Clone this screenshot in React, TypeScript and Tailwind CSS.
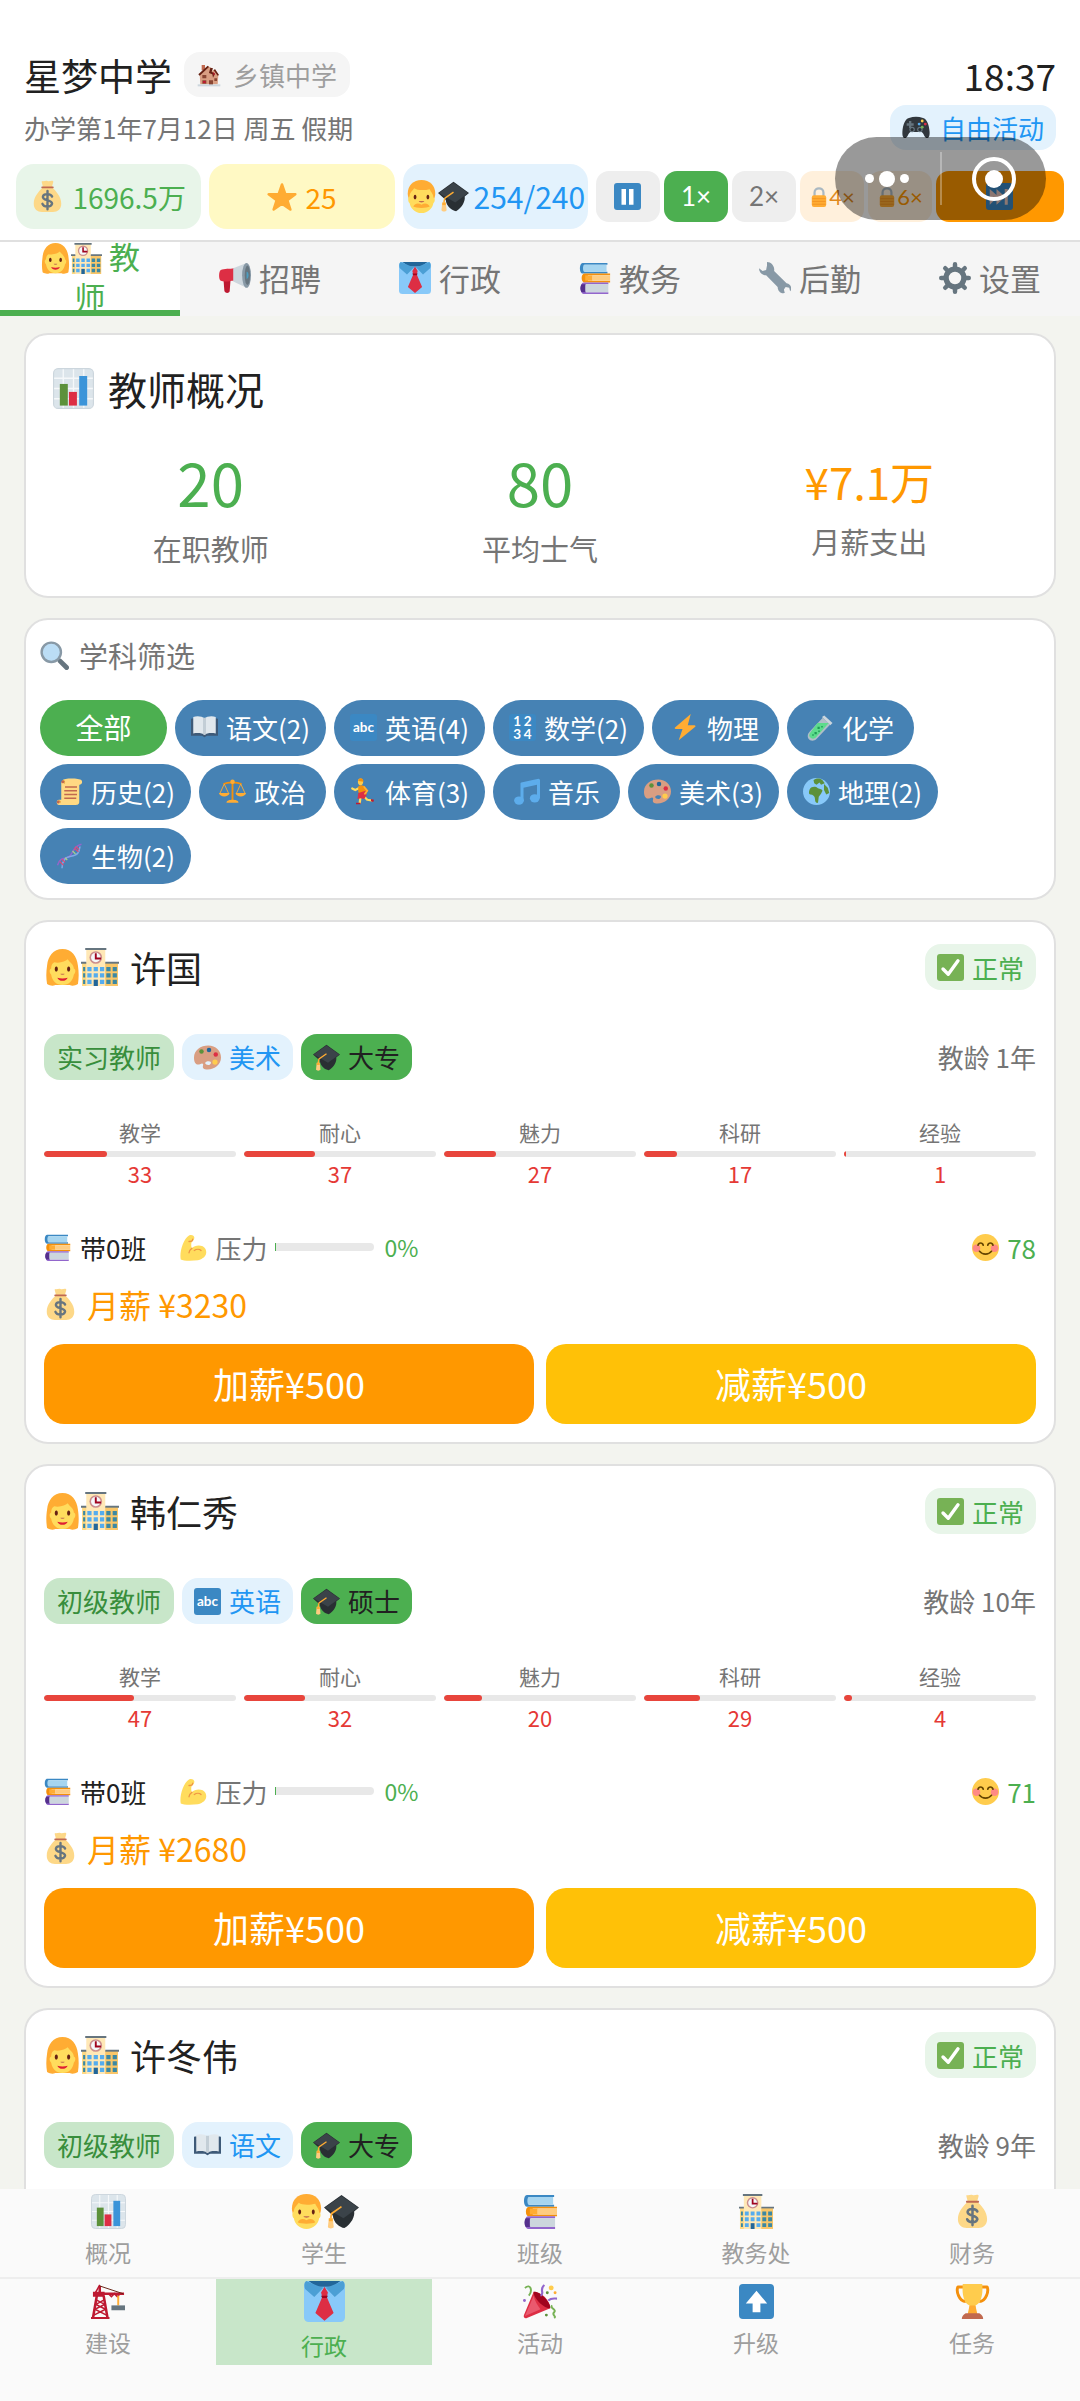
import type { ReactNode } from "react";
import { clsx } from "clsx";

/* All glyphs are drawn on a 36 x 36 grid. */
const ICONS: Record<string, ReactNode> = {
  house: (
    <>
      <path fill="#C1694F" d="M7 3h5v8H7z" />
      <path fill="#D99E82" d="M4 17 17 5l5 3-2 6 5-4 7 8-1 14H5z" />
      <path fill="#662113" d="M2 17 16 4l2 2L4 19zM20 7l4 1-2 5 5 3-3 6-1-5-5-2zM27 9l6 9-2 1-6-8z" />
      <path fill="#8A4633" d="M8 18h6v5H8zM18 26h6v7h-6zM8 26h6v5H8zM26 23h4v4h-4z" />
      <path fill="#BE1931" d="M9 27h4v3H9zM24 13l3 3-2 3z" />
      <path fill="#CCD6DD" d="M1 32h34v3H1z" />
    </>
  ),
  gamepad: (
    <>
      <path fill="#31373D" d="M9 5c6-2 12-2 18 0 5 1 8 9 8.500 18 .3 6-1.500 8-3.500 8-3 0-4-7-7-8H11c-3 1-4 8-7 8-2 0-3.800-2-3.500-8C1 14 4 6 9 5z" />
      <path fill="#66757F" d="M9 9h3v3h3v3h-3v3H9v-3H6v-3h3z" />
      <circle cx="13" cy="20" r="3.500" fill="#66757F" />
      <circle cx="23" cy="20" r="3.500" fill="#66757F" />
      <circle cx="13" cy="20" r="2" fill="#292F33" />
      <circle cx="23" cy="20" r="2" fill="#292F33" />
      <circle cx="26" cy="9" r="1.800" fill="#FFCC4D" />
      <circle cx="26" cy="17" r="1.800" fill="#77B255" />
      <circle cx="22" cy="13" r="1.800" fill="#55ACEE" />
      <circle cx="30" cy="13" r="1.800" fill="#DD2E44" />
    </>
  ),
  money: (
    <>
      <path fill="#FDD888" d="M12 1c2 1 4-1 6 0s4-1 6 0c1 1-1 4-1 7 4 4 10 10 10 18 0 6-4 9-9 9H12c-5 0-9-3-9-9C3 18 9 12 13 8c0-3-2-6-1-7z" />
      <path fill="#BF6952" d="M12 7h12c1 0 1 2 0 2H12c-1 0-1-2 0-2z" />
      <path fill="none" stroke="#67757F" strokeWidth="2.600" strokeLinecap="round" d="M18 12v20M23 18c-1-3-9-4-10 0-1 5 10 3 10 8-1 4-9 4-10.500 0" />
    </>
  ),
  star: (
    <path fill="#FFAC33" stroke="#FFAC33" strokeWidth="3" strokeLinejoin="round" d="m18 3 4 11.500 12 .2-9.600 7.200L28 33l-10-7-10 7 3.600-11.100L2 14.700l12-.2z" />
  ),
  man: (
    <>
      <path fill="#FFAC33" d="M18 0C9 0 3 6 3 15c0 3 1 6 3 8h24c2-2 3-5 3-8C33 6 27 0 18 0z" />
      <path fill="#FFDC5D" d="M5 18c0-4 3-6 5-9 4 3 13 2 17 1 1 3 4 5 4 9 2 0 2 5 0 6-1 6-6 11-13 11S6 31 5 25c-2-1-2-7 0-7z" />
      <path fill="#662113" d="M11 16c2 0 2 5 0 5s-2-5 0-5zM25 16c2 0 2 5 0 5s-2-5 0-5z" />
      <path fill="#C1694F" d="M15 23h6c0 2-6 2-6 0z" />
      <path fill="#FFAC33" d="M9 29c2-4 6-4 9-2 3-2 7-2 9 2-3 2-15 2-18 0z" />
    </>
  ),
  woman: (
    <>
      <path fill="#FFAC33" d="M18 0C9 0 4 7 3 16c-1 7-1 12 0 18 3 2 6 2 8 1h14c2 1 5 1 8-1 1-6 1-11 0-18C32 7 27 0 18 0z" />
      <path fill="#FFDC5D" d="M7 19c0-3 1-5 3-6 6 1 11-1 13-3 2 3 6 5 6 9 2 1 2 4 0 6-1 6-5 10-11 10S8 31 7 25c-2-2-2-5 0-6z" />
      <path fill="#662113" d="M12 17c2 0 2 5 0 5s-2-5 0-5zM24 17c2 0 2 5 0 5s-2-5 0-5z" />
      <path fill="#C1694F" d="M16 24h4c0 1.500-4 1.500-4 0z" />
      <path fill="#DF1F32" d="M13 28c3 1 7 1 10 0-1 4-9 4-10 0z" />
    </>
  ),
  cap: (
    <>
      <path fill="#292F33" d="M0 14 18 1l18 13-5 4c1 5-3 13-10 17-5-1-11-5-12-13z" />
      <path fill="#3B4349" d="M1 14 18 2l17 12-15 11z" />
      <path fill="none" stroke="#FFAC33" strokeWidth="1.800" d="M18 13 8 20c-1 2-1 4-1 7" />
      <path fill="#FFCC80" d="M5 25h4l1 9c-1 2-5 2-6 0z" />
      <path fill="#FFAC33" d="M5 25h4v3H5z" />
    </>
  ),
  pause: (
    <>
      <rect width="36" height="36" rx="4" fill="#3B88C3" />
      <path fill="#fff" d="M10 8h6v21h-6zM20 8h6v21h-6z" />
    </>
  ),
  next: (
    <>
      <rect width="36" height="36" rx="4" fill="#3B88C3" />
      <path fill="#E9C7BE" d="m5 8 9 8V8l11 10V8h4v21h-4V19L14 29v-9l-9 9z" />
    </>
  ),
  lock: (
    <>
      <path fill="none" stroke="#AAB8C2" strokeWidth="4" d="M10 18v-8c0-10 16-10 16 0v8" />
      <rect x="5" y="15" width="26" height="21" rx="4" fill="#FFAC33" />
      <path stroke="#F19020" strokeWidth="1.500" d="M6 21h24M6 26h24M6 31h24" />
    </>
  ),
  school: (
    <>
      <path fill="#FFD983" d="M1 14h34v22H1z" />
      <path fill="#FFE8B6" d="M5 1h18v35H5z" />
      <path fill="#66757F" d="M4 0h20v2H4zM0 13h5v2H0zM23 13h13v2H23z" />
      <path fill="#F4B350" opacity=".5" d="M23 15h12v21H23z" />
      <circle cx="14" cy="9" r="6" fill="#A1466B" opacity=".55" />
      <circle cx="14" cy="9" r="4.500" fill="#F5F8FA" />
      <path fill="none" stroke="#A0041E" strokeWidth="1.800" d="M14 5v5h5" />
      <path fill="#55ACEE" d="M6 18h4v4H6zM12 18h4v4h-4zM18 18h4v4h-4zM6 24h4v4H6zM12 24h4v4h-4zM18 24h4v4h-4zM6 30h4v4H6zM18 30h4v4h-4z" />
      <path fill="#3B88A3" d="M2 18h2v4H2zM24 18h4v4h-4zM30 18h4v4h-4zM2 24h2v4H2zM24 24h4v4h-4zM30 24h4v4h-4zM2 30h2v4H2zM24 30h4v4h-4zM30 30h4v4h-4z" />
      <path fill="#226699" d="M12 30h4v6h-4z" />
    </>
  ),
  megaphone: (
    <>
      <path fill="#BE1931" d="m5 19 8 1-1 13c-1 3-6 2-6-1z" />
      <path fill="#DD2E44" d="M2 9c4-2 10-1 15-2v14C12 21 6 23 2 21c-3-2-2-11 0-12z" />
      <path fill="#CCD6DD" d="M16 7 31 1v28l-15-7z" />
      <ellipse cx="31" cy="15" rx="5" ry="14" fill="#8899A6" />
      <ellipse cx="32" cy="15" rx="3" ry="11" fill="#66757F" />
      <path fill="#4B9DC0" d="M31 11c3 0 3 8 0 8z" />
    </>
  ),
  tie: (
    <>
      <rect width="36" height="36" rx="4" fill="#88C9F9" />
      <path fill="#226699" d="M4 0h28l-7 5H11z" />
      <path fill="#4B9FD5" d="M2 0 14 5l4 1 4-1L34 0c2 1 2 5 1 7l-8 7-8-8h-2l-8 8-8-7C0 5 0 1 2 0z" />
      <path fill="#DD2E44" d="m18 5 3 5-1 4 6 14-8 7-8-7 6-14-1-4z" />
      <path fill="#A0041E" d="M15 13h6l-1 2h-4z" />
    </>
  ),
  books: (
    <>
      <path fill="#3B88C3" d="M4 1h28v2H6v8h26v2H4C0 13 0 1 4 1z" />
      <path fill="#A6D5F0" d="M6 3h25v8H6c-2 0-2-8 0-8z" />
      <path fill="#F4900C" d="M6 13h29v2H10v6h25v2H6c-4 0-4-10 0-10z" />
      <path fill="#FFCC80" d="M15 15h20v6H15z" />
      <path fill="#FFAC33" d="M7 15h8v6H7z" />
      <path fill="#9266CC" d="M5 23h28v2H8v9h25v2H5c-4 0-4-13 0-13z" />
      <path fill="#CCD6DD" d="M8 25h25v9H8c-2 0-2-9 0-9z" />
      <path fill="#55308D" d="M3 25h4v9H3c-2-2-2-7 0-9z" />
    </>
  ),
  wrench: (
    <path fill="#8899A6" d="M9 0c5 0 9 5 8 10l14 14c6 1 6 7 4 9l-1-4-4-1-2 3 1 4c-5 1-8-3-8-7L8 15C3 15 0 11 0 7l4 3 4-1 1-5z" />
  ),
  gear: (
    <>
      <circle cx="18" cy="18" r="10" fill="none" stroke="#66757F" strokeWidth="6" />
      <path stroke="#66757F" strokeWidth="5" strokeLinecap="round" d="M18 2.500v3M18 30.500v3M2.500 18h3M30.500 18h3M7 7l2 2M27 27l2 2M7 29l2-2M27 9l2-2" />
    </>
  ),
  chart: (
    <>
      <rect x=".5" y=".5" width="35" height="35" rx="4" fill="#DCE5EB" stroke="#CCD6DD" />
      <path stroke="#F5F8FA" strokeWidth="1.200" d="M9 1v34M18 1v34M27 1v34M1 9h34M1 18h34M1 27h34" />
      <path fill="#5C913B" d="M6 14h7v19H6z" />
      <path fill="#DD2E44" d="M14 21h7v12h-7z" />
      <path fill="#3B94D9" d="M23 7h7v26h-7z" />
    </>
  ),
  search: (
    <>
      <path stroke="#66757F" strokeWidth="6" strokeLinecap="round" d="m25 25 8 8" />
      <circle cx="14" cy="14" r="12" fill="#BBDDF5" stroke="#8899A6" strokeWidth="3" />
    </>
  ),
  book: (
    <>
      <path fill="#3E5A78" d="M1 6h34c1 0 1 1 1 2v21H22c-2 0-3 2-4 2s-2-2-4-2H0V8c0-1 0-2 1-2z" />
      <path fill="#E1E8ED" d="M3 4c5-2 12-1 15 2 3-3 10-4 15-2v22c-5-1-12-1-15 2-3-3-10-3-15-2z" />
      <path fill="#C3CED6" d="M16 5h4v22l-2 1-2-1z" />
    </>
  ),
  abc: (
    <>
      <rect width="36" height="36" rx="4" fill="#3B88C3" />
      <text x="18" y="24" fill="#fff" fontFamily="Lato, sans-serif" fontWeight="700" fontSize="18" textAnchor="middle">abc</text>
    </>
  ),
  numbers: (
    <>
      <rect width="36" height="36" rx="4" fill="#3B88C3" />
      <text x="11" y="16" fill="#fff" fontFamily="Lato, sans-serif" fontWeight="700" fontSize="18" textAnchor="middle">1</text>
      <text x="25" y="16" fill="#fff" fontFamily="Lato, sans-serif" fontWeight="700" fontSize="18" textAnchor="middle">2</text>
      <text x="11" y="33" fill="#fff" fontFamily="Lato, sans-serif" fontWeight="700" fontSize="18" textAnchor="middle">3</text>
      <text x="25" y="33" fill="#fff" fontFamily="Lato, sans-serif" fontWeight="700" fontSize="18" textAnchor="middle">4</text>
    </>
  ),
  zap: <path fill="#FFAC33" d="M25 0 4 18c-1 1 0 2 1 2h9L9 35l22-18c1-1 0-2-1-2h-9z" />,
  tube: (
    <>
      <path fill="#CCD6DD" d="m23 2 11 10-3 3L20 4z" />
      <path fill="#B0BEC8" d="m21 5 10 9-18 19c-4 4-9 3-11 0s-1-7 2-10z" />
      <path fill="#5DDC8C" d="M14 12h15L12 31c-3 3-6 2-8 0s-1-4 1-7z" />
      <path fill="#1F9B57" d="M14 17h3v3h-3zM10 24h3v3h-3zM19 16h2v2h-2zM15 22h2v2h-2zM7 27h2v2H7z" />
    </>
  ),
  scroll: (
    <>
      <path fill="#FFD983" d="M9 3c1-3 22-3 25 0 2 3 0 6-3 6v23c0 4-4 4-6 4H4c-4 0-4-7 0-7h3V6z" />
      <path fill="#E39F3D" d="M9 3c3-2 5 5 1 5 2-1 1-4-1-5zM2 31c2-3 6 0 4 3 0-2-1-3-4-3z" />
      <path stroke="#C1694F" strokeWidth="2" d="M12 12h16M11 17h17M11 22h17M11 27h16" />
      <circle cx="9" cy="5" r="2" fill="#C1694F" />
      <circle cx="3" cy="32" r="2" fill="#C1694F" />
    </>
  ),
  scales: (
    <>
      <path fill="none" stroke="#F4900C" strokeWidth="2.500" d="M18 3v27M6 8c6-3 18-3 24 0" />
      <path fill="none" stroke="#FFAC33" strokeWidth="1.200" d="M7 8 1 21h12zM29 8l-6 13h12z" />
      <path fill="#FFAC33" d="M0 20h14c-1 6-13 6-14 0zM22 20h14c-1 6-13 6-14 0zM10 33c0-3 4-4 8-4s8 1 8 4z" />
      <circle cx="18" cy="5" r="3" fill="#FFAC33" />
    </>
  ),
  runner: (
    <>
      <path fill="none" stroke="#FFDC5D" strokeWidth="3" strokeLinecap="round" strokeLinejoin="round" d="m13 13-6 3-4-2M19 25l4 4 6 1M14 25l-1 8" />
      <path fill="#F4900C" d="M11 11c2-2 6-2 8 0l3 6v5l-9 1-2-5z" />
      <path fill="#DD2E44" d="m11 20 10-3 1 6-3 5-5-1-4 1z" />
      <path fill="none" stroke="#FFAC33" strokeWidth="2.500" strokeLinecap="round" d="m19 12 4 5-3 4" />
      <ellipse cx="14" cy="5" rx="3.500" ry="4.500" fill="#FFCC4D" />
      <path fill="#F4900C" d="M11 4c0-5 7-5 7 1z" />
      <path fill="#BE1931" d="m28 28 4 1-1 3-3-1zM8 33h6v2H8z" />
    </>
  ),
  music: (
    <>
      <path fill="#5DADEC" d="M11 6 34 1c1 0 2 1 2 2v24h-4V9l-18 4v18h-4V8c0-1 0-2 1-2z" />
      <ellipse cx="8" cy="30" rx="6.500" ry="5.500" fill="#5DADEC" />
      <ellipse cx="29" cy="27" rx="6.500" ry="5.500" fill="#5DADEC" />
    </>
  ),
  palette: (
    <>
      <path fill="#D99E82" fillRule="evenodd" d="M19 2c10 0 17 7 17 16S28 34 18 34c-5 0-7-2-6-5s-1-4-4-2c-6 2-8-3-8-9C0 8 9 2 19 2zm-1 21c-5 1-3 5 1 5s6-6-1-5z" />
      <circle cx="10" cy="10" r="3" fill="#5C913B" />
      <circle cx="20" cy="8" r="3" fill="#269" />
      <circle cx="29" cy="14" r="3" fill="#DD2E44" />
      <circle cx="28" cy="24" r="3.500" fill="#FFCC4D" />
    </>
  ),
  globe: (
    <>
      <circle cx="18" cy="18" r="18" fill="#88C9F9" />
      <path fill="#5C913B" d="M14 3c3-3 9-3 12 0l3 4-5 2-2-3-4 3-3-2zM9 15c2-4 8-4 10-2s6 1 7 4l-2 4-3 4-1 8c-3 1-4-2-4-5 0-4-3-6-6-6s-2-5-1-7zM28 8l5 5 2 7-4 2-3-6z" />
    </>
  ),
  dna: (
    <>
      <path fill="none" stroke="#9266CC" strokeWidth="2" d="M2 31c4-14 12-6 17-13S25 5 34 3" />
      <path fill="none" stroke="#7FA8E8" strokeWidth="2" d="M8 35c0-9 3-15 12-16S31 14 32 6" />
      <path stroke="#DD4C74" strokeWidth="1.500" d="m5 26 5 5M8 23l4 4M24 8l6 5M26 6l5 4" />
      <path stroke="#A6D388" strokeWidth="1.500" d="m12 21 3 3M22 12l4 4" />
    </>
  ),
  check: (
    <>
      <rect width="36" height="36" rx="4" fill="#77B255" />
      <path fill="none" stroke="#fff" strokeWidth="4.500" strokeLinecap="round" strokeLinejoin="round" d="m8 20 7 7L28 9" />
    </>
  ),
  muscle: (
    <>
      <path fill="#FFDC5D" d="M12 2c4-2 8 1 7 4s-4 4-4 7 0 5 1 6c4-5 15-5 18 1 3 7-1 13-10 15-8 1-20 1-23-1-2-9 3-27 11-32z" />
      <path fill="none" stroke="#EF9645" strokeWidth="1.800" strokeLinecap="round" d="M12 10c3 0 5-1 5-3M16 19c-3 2-4 4-4 6M19 22c3-2 7-2 9 0" />
    </>
  ),
  smile: (
    <>
      <circle cx="18" cy="18" r="18" fill="#FFCC4D" />
      <circle cx="6" cy="19" r="5" fill="#FF7892" opacity=".8" />
      <circle cx="30" cy="19" r="5" fill="#FF7892" opacity=".8" />
      <path fill="none" stroke="#664500" strokeWidth="2.200" strokeLinecap="round" d="M8 15c1-4 6-4 7 0M21 15c1-4 6-4 7 0M10 23c4 5 12 5 16 0" />
    </>
  ),
  crane: (
    <>
      <path fill="none" stroke="#BE1931" strokeWidth="2.600" d="M6 12 2 35M13 12l4 23M3 10h31M9 2v8" />
      <path fill="none" stroke="#BE1931" strokeWidth="1.600" d="m5 16 9 5-10 5 12 6M14 16l-9 5 10 5-12 6M9 1l-5 9M18 10l3 3 3-3 3 3 3-3" />
      <path fill="none" stroke="#662113" strokeWidth="1" d="m9 2 24 8" />
      <path fill="#BE1931" d="M2 8h12v5H2zM0 34h19v2H0z" />
      <path fill="#FFAC33" d="M27 12h2v10h-2z" />
      <path fill="#66757F" d="M21 22h14v5H21z" />
    </>
  ),
  party: (
    <>
      <path fill="#DD2E44" d="M11 8 1 32c-1 2 1 4 3 3l24-10C28 17 19 8 11 8z" />
      <path fill="#EA596E" d="m11 12-9 21 16-7c-3-4-6-9-7-14z" />
      <path fill="#A0041E" d="M11 8c6-1 18 11 17 17-6 1-18-11-17-17z" />
      <path fill="none" stroke="#77B255" strokeWidth="2" d="M2 4c6-5 8 3 4 8M30 22c-3 3 5 4 2 7s3 4 0 6" />
      <path fill="none" stroke="#9266CC" strokeWidth="2.200" d="M18 12c5-2-2-6 4-11M26 17c3-3 6-2 9-2" />
      <circle cx="29" cy="4" r="2.500" fill="#FFCC4D" />
      <circle cx="1.500" cy="17" r="1.500" fill="#9266CC" />
      <circle cx="33" cy="9" r="1.500" fill="#FFAC33" />
      <circle cx="25" cy="9" r="1.500" fill="#5C913B" />
      <circle cx="24" cy="32" r="1.500" fill="#5C913B" />
    </>
  ),
  up: (
    <>
      <rect width="36" height="36" rx="4" fill="#3B88C3" />
      <path fill="#fff" d="M18 7 29 20h-7v9h-8v-9H7z" />
    </>
  ),
  trophy: (
    <>
      <path fill="none" stroke="#F4900C" strokeWidth="3" strokeLinejoin="round" d="M9 3H3c-2 4 1 15 8 15M27 3h6c2 4-1 15-8 15" />
      <path fill="#FFCC4D" d="M8 0h20c1 10-1 20-7 22l1 8h-8l1-8C9 20 7 10 8 0z" />
      <path fill="#FFAC33" d="M15 22h6l2 9H13z" />
      <path fill="#C1694F" d="M11 30h14c2 1 4 3 4 6H7c0-3 2-5 4-6z" />
    </>
  ),
};

function Icon({ name, className }: { name: string; className: string }) {
  return (
    <svg viewBox="0 0 36 36" aria-hidden="true" className={clsx("shrink-0", className)}>
      {ICONS[name]}
    </svg>
  );
}

const TABS = [
  { icon: "megaphone", label: "招聘" },
  { icon: "tie", label: "行政" },
  { icon: "books", label: "教务" },
  { icon: "wrench", label: "后勤" },
  { icon: "gear", label: "设置" },
];

const SUBJECTS = [
  { icon: "book", label: "语文(2)" },
  { icon: "abc", label: "英语(4)" },
  { icon: "numbers", label: "数学(2)" },
  { icon: "zap", label: "物理" },
  { icon: "tube", label: "化学" },
  { icon: "scroll", label: "历史(2)" },
  { icon: "scales", label: "政治" },
  { icon: "runner", label: "体育(3)" },
  { icon: "music", label: "音乐" },
  { icon: "palette", label: "美术(3)" },
  { icon: "globe", label: "地理(2)" },
  { icon: "dna", label: "生物(2)" },
];

const SKILLS = ["教学", "耐心", "魅力", "科研", "经验"];

type Details = { skills: number[]; morale: number; salary: number };

type Teacher = {
  name: string;
  rank: string;
  subject: string;
  subjectIcon: string;
  degree: string;
  years: number;
  details?: Details;
};

const TEACHERS: Teacher[] = [
  {
    name: "许国",
    rank: "实习教师",
    subject: "美术",
    subjectIcon: "palette",
    degree: "大专",
    years: 1,
    details: { skills: [33, 37, 27, 17, 1], morale: 78, salary: 3230 },
  },
  {
    name: "韩仁秀",
    rank: "初级教师",
    subject: "英语",
    subjectIcon: "abc",
    degree: "硕士",
    years: 10,
    details: { skills: [47, 32, 20, 29, 4], morale: 71, salary: 2680 },
  },
  { name: "许冬伟", rank: "初级教师", subject: "语文", subjectIcon: "book", degree: "大专", years: 9 },
];

const NAV = [
  [
    { icon: "chart", label: "概况" },
    { icon: "man", label: "学生" },
    { icon: "books", label: "班级" },
    { icon: "school", label: "教务处" },
    { icon: "money", label: "财务" },
  ],
  [
    { icon: "crane", label: "建设" },
    { icon: "tie", label: "行政", active: true },
    { icon: "party", label: "活动" },
    { icon: "up", label: "升级" },
    { icon: "trophy", label: "任务" },
  ],
];

function Header() {
  return (
    <header className="shrink-0 border-b-2 border-[#e0e0e0] bg-white pt-[52px] pb-[11px]">
      <div className="flex flex-col gap-2 px-6">
        <div className="flex h-[45px] items-center">
          <h1 className="text-[37px] leading-[42px] text-[#212121]">星梦中学</h1>
          <span className="ml-3 flex h-[45px] items-center gap-3 rounded-[16px] bg-[#f5f5f5] px-[13px] text-[26px] leading-[42px] text-[#9e9e9e]">
            <Icon name="house" className="size-6" />
            乡镇中学
          </span>
          <time className="ml-auto text-[37px] leading-[42px] text-[#212121]">18:37</time>
        </div>
        <div className="flex h-[45px] items-center justify-between">
          <p className="text-[26px] leading-[42px] text-[#757575]">办学第1年7月12日 周五 假期</p>
          <span className="flex h-[45px] items-center gap-[10px] rounded-[16px] bg-[#e3f2fd] px-3 text-[26px] leading-[42px] text-[#2196f3]">
            <Icon name="gamepad" className="size-7" />
            自由活动
          </span>
        </div>
      </div>
      <div className="mt-[14px] flex items-center gap-2 px-4">
        <div className="flex h-[65px] min-w-0 flex-1 items-center justify-center gap-2 rounded-[18px] bg-[#e8f5e9] text-[28px] text-[#4caf50]">
          <Icon name="money" className="size-[33px]" />
          1696.5万
        </div>
        <div className="flex h-[65px] min-w-0 flex-1 items-center justify-center gap-2 rounded-[18px] bg-[#fff9c4] text-[28px] text-[#ff9800]">
          <Icon name="star" className="size-[30px]" />
          25
        </div>
        <div className="flex h-[65px] min-w-0 flex-1 items-center justify-center gap-1 rounded-[18px] bg-[#e3f2fd] text-[30px] text-[#2196f3]">
          <span className="flex items-center">
            <Icon name="man" className="size-[33px]" />
            <Icon name="cap" className="size-[31px]" />
          </span>
          254/240
        </div>
        <div className="flex h-[51px] gap-1 font-[Lato,'Noto_Sans_CJK_SC',sans-serif]">
          <button aria-label="暂停" className="flex w-16 items-center justify-center rounded-[13px] bg-[#eeeeee]">
            <Icon name="pause" className="size-[27px]" />
          </button>
          <button className="w-16 rounded-[13px] bg-[#4caf50] text-[26px] text-white">1×</button>
          <button className="w-16 rounded-[13px] bg-[#eeeeee] text-[26px] text-[#757575]">2×</button>
          <button className="flex w-16 items-center justify-center rounded-[13px] bg-[#fff0dc] text-[22px] text-[#e08a1e]">
            <Icon name="lock" className="size-[20px]" />
            4×
          </button>
          <button className="flex w-16 items-center justify-center rounded-[13px] bg-[#fff0dc] text-[22px] text-[#ff9800]">
            <Icon name="lock" className="size-[20px]" />
            6×
          </button>
          <button aria-label="下一阶段" className="flex w-32 items-center justify-center rounded-[13px] bg-[#ff9800]">
            <Icon name="next" className="size-[27px]" />
          </button>
        </div>
      </div>
    </header>
  );
}

/* Host app capsule that floats over the page. */
function Capsule() {
  return (
    <div className="absolute top-[137px] right-[34px] flex h-[83px] w-[211px] items-center rounded-full bg-black/40">
      <button aria-label="更多" className="flex flex-1 items-center justify-center gap-[5px]">
        <span className="size-[9px] rounded-full bg-white" />
        <span className="size-4 rounded-full bg-white" />
        <span className="size-[9px] rounded-full bg-white" />
      </button>
      <span className="h-[53px] w-[2px] bg-white/30" />
      <button aria-label="关闭" className="flex flex-1 items-center justify-center">
        <span className="flex size-11 items-center justify-center rounded-full border-4 border-white">
          <span className="size-[18px] rounded-full bg-white" />
        </span>
      </button>
    </div>
  );
}

function Tabs() {
  return (
    <nav className="grid h-[74px] shrink-0 grid-cols-6 grid-rows-1 bg-[#f5f5f5] text-[31px] text-[#757575]">
      <button className="flex min-h-0 items-center justify-center border-b-[6px] border-[#4caf50] bg-white px-[30px] text-[#4caf50]">
        <span className="leading-[40px]">
          <Icon name="woman" className="inline-block size-[31px] align-[-5px]" />
          <Icon name="school" className="inline-block size-[31px] align-[-5px]" /> 教师
        </span>
      </button>
      {TABS.map((tab) => (
        <button key={tab.label} className="flex min-h-0 items-center justify-center gap-2 pb-[2px]">
          <Icon name={tab.icon} className="size-[32px]" />
          {tab.label}
        </button>
      ))}
    </nav>
  );
}

function Stat({ value, label, money }: { value: string; label: string; money?: boolean }) {
  return (
    <div className="flex flex-col items-center gap-2">
      <div
        className={clsx(
          money ? "text-[44px] leading-[60px] text-[#ff9800]" : "text-[60px] leading-[74px] text-[#4caf50]",
        )}
      >
        {value}
      </div>
      <div className="text-[29px] leading-[44px] text-[#757575]">{label}</div>
    </div>
  );
}

function Overview() {
  return (
    <section className="rounded-3xl border-2 border-[#e0e0e0] bg-white px-5 pt-[18px] pb-[26px]">
      <h2 className="flex items-center gap-[14px] px-[7px] text-[39px] leading-[70px] text-[#212121]">
        <Icon name="chart" className="size-[41px]" />
        教师概况
      </h2>
      <div className="mt-[21px] grid grid-cols-3 items-center">
        <Stat value="20" label="在职教师" />
        <Stat value="80" label="平均士气" />
        <Stat value="¥7.1万" label="月薪支出" money />
      </div>
    </section>
  );
}

function SubjectFilter() {
  return (
    <section className="rounded-3xl border-2 border-[#e0e0e0] bg-white p-[14px]">
      <h2 className="flex items-center gap-[10px] text-[29px] leading-[42px] text-[#757575]">
        <Icon name="search" className="size-[29px]" />
        学科筛选
      </h2>
      <div className="mt-6 flex flex-wrap gap-2 text-[26px] text-white">
        <button className="h-14 min-w-[127px] rounded-full bg-[#4caf50] pb-[2px] text-[28px]">全部</button>
        {SUBJECTS.map((s) => (
          <button
            key={s.label}
            className="flex h-14 min-w-[127px] items-center justify-center gap-2 rounded-full bg-[#4682b4] px-4 pb-[2px]"
          >
            <Icon name={s.icon} className="size-[27px]" />
            {s.label}
          </button>
        ))}
      </div>
    </section>
  );
}

function TeacherDetails({ details }: { details: Details }) {
  return (
    <>
      <div className="mt-[38px] grid grid-cols-5 gap-2 text-center text-[21px] leading-[28px]">
        {SKILLS.map((skill, i) => (
          <div key={skill}>
            <div className="text-[#757575]">{skill}</div>
            <div className="mt-[5px] mb-[2px] h-[6px] overflow-hidden rounded-full bg-[#e8e8e8]">
              <div className="h-full rounded-full bg-[#e8453c]" style={{ width: `${details.skills[i]}%` }} />
            </div>
            <div className="text-[22px] text-[#e53935]">{details.skills[i]}</div>
          </div>
        ))}
      </div>

      <div className="mt-[42px] flex h-9 items-center text-[26px]">
        <Icon name="books" className="size-[27px]" />
        <span className="ml-[9px] text-[#212121]">带0班</span>
        <Icon name="muscle" className="ml-[34px] size-[27px]" />
        <span className="ml-2 text-[#757575]">压力</span>
        <div className="ml-2 h-2 w-[99px] overflow-hidden rounded-r-full bg-[#e8e8e8]">
          <div className="h-full w-px bg-[#4caf50]" />
        </div>
        <span className="ml-[10px] text-[23px] text-[#4caf50]">0%</span>
        <span className="ml-auto flex items-center gap-2 text-[#4caf50]">
          <Icon name="smile" className="size-[27px]" />
          {details.morale}
        </span>
      </div>

      <div className="mt-[18px] flex h-[42px] items-center gap-[10px] text-[32px] text-[#ff9800]">
        <Icon name="money" className="size-[33px]" />
        月薪 ¥{details.salary}
      </div>

      <div className="mt-[19px] grid grid-cols-2 gap-3 text-[36px] text-white">
        <button className="h-20 rounded-[20px] bg-[#ff9800] pb-[2px]">加薪¥500</button>
        <button className="h-20 rounded-[20px] bg-[#ffc107] pb-[2px]">减薪¥500</button>
      </div>
    </>
  );
}

function TeacherCard({ teacher }: { teacher: Teacher }) {
  return (
    <article
      className={clsx(
        "border-2 border-[#e0e0e0] bg-white px-[18px] pt-[18px]",
        teacher.details ? "rounded-3xl pb-[18px]" : "grow rounded-t-3xl border-b-0",
      )}
    >
      <div className="flex h-[54px] items-center">
        <Icon name="woman" className="size-[37px]" />
        <Icon name="school" className="size-[38px]" />
        <h3 className="ml-[11px] text-[36px] leading-[50px] text-[#212121]">{teacher.name}</h3>
        <span className="ml-auto flex h-[46px] items-center gap-2 rounded-[16px] bg-[#e8f5e9] px-3 text-[26px] text-[#4caf50]">
          <Icon name="check" className="size-[27px]" />
          正常
        </span>
      </div>

      <div className="mt-10 flex h-[46px] items-center gap-2 text-[26px] leading-[46px]">
        <span className="rounded-[16px] bg-[#c8e6c9] px-[13px] text-[#388e3c]">{teacher.rank}</span>
        <span className="flex items-center gap-2 rounded-[16px] bg-[#e3f2fd] px-3 text-[#2196f3]">
          <Icon name={teacher.subjectIcon} className="size-[27px]" />
          {teacher.subject}
        </span>
        <span className="flex items-center gap-2 rounded-[16px] bg-[#4caf50] px-3 text-[#212121]">
          <Icon name="cap" className="size-[27px]" />
          {teacher.degree}
        </span>
        <span className="ml-auto text-[#757575]">教龄 {teacher.years}年</span>
      </div>

      {teacher.details && <TeacherDetails details={teacher.details} />}
    </article>
  );
}

function BottomNav() {
  return (
    <nav className="shrink-0 bg-[#fafafa] pb-9 text-[23px] leading-[32px] text-[#9e9e9e]">
      {NAV.map((row, i) => (
        <div key={i} className={clsx("grid h-[88px] grid-cols-5", i > 0 && "border-t-2 border-[#eeeeee]")}>
          {row.map((item) => (
            <a
              key={item.label}
              href="#"
              className={clsx(
                "flex flex-col items-center",
                "active" in item ? "bg-[#c8e6c9] pt-[2px] text-[#4caf50]" : "pt-[5px]",
              )}
            >
              <span className="flex">
                <Icon name={item.icon} className={"active" in item ? "size-[41px]" : "size-[35px]"} />
                {item.icon === "man" && <Icon name="cap" className="size-[35px]" />}
              </span>
              <span className="mt-[7px]">{item.label}</span>
            </a>
          ))}
        </div>
      ))}
    </nav>
  );
}

export default function App() {
  return (
    <div className="relative flex h-screen flex-col overflow-hidden bg-[#f3f4ef] font-['Noto_Sans_CJK_SC',sans-serif]">
      <Header />
      <Tabs />
      <main className="flex min-h-0 flex-1 flex-col gap-5 overflow-hidden px-6 pt-[17px]">
        <Overview />
        <SubjectFilter />
        {TEACHERS.map((teacher) => (
          <TeacherCard key={teacher.name} teacher={teacher} />
        ))}
      </main>
      <BottomNav />
      <Capsule />
    </div>
  );
}
